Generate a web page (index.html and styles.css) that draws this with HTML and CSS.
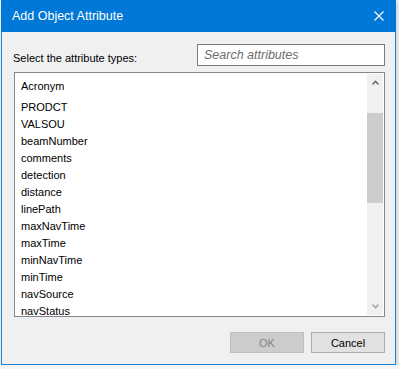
FILE: index.html
```html
<!DOCTYPE html>
<html lang="en">
<head>
  <meta charset="UTF-8" />
  <title>Add Object Attribute</title>
  <link rel="stylesheet" href="styles.css">
</head>
<body>
  <div class="window">
    <div class="titlebar">
      <span class="title">Add Object Attribute</span>
      <svg class="close" width="10" height="10" viewBox="0 0 10 10">
        <path d="M0.5 0.5 L9.5 9.5 M9.5 0.5 L0.5 9.5" stroke="#fff" stroke-width="1.1" fill="none"/>
      </svg>
    </div>

    <div class="content">
      <div class="top-row">
        <span class="label">Select the attribute types:</span>
        <div class="search">Search attributes</div>
      </div>

      <div class="listbox">
        <ul class="items">
          <li class="first">Acronym</li>
          <li>PRODCT</li>
          <li>VALSOU</li>
          <li>beamNumber</li>
          <li>comments</li>
          <li>detection</li>
          <li>distance</li>
          <li>linePath</li>
          <li>maxNavTime</li>
          <li>maxTime</li>
          <li>minNavTime</li>
          <li>minTime</li>
          <li>navSource</li>
          <li>navStatus</li>
        </ul>
        <div class="scrollbar">
          <div class="arrow">
            <svg width="7" height="5" viewBox="0 0 7 5"><path d="M0.5 4.5 L3.5 1.2 L6.5 4.5" stroke="#606060" stroke-width="1.4" fill="none"/></svg>
          </div>
          <div class="track">
            <div class="thumb"></div>
          </div>
          <div class="arrow">
            <svg width="7" height="5" viewBox="0 0 7 5"><path d="M0.5 0.5 L3.5 3.8 L6.5 0.5" stroke="#a0a0a0" stroke-width="1.4" fill="none"/></svg>
          </div>
        </div>
      </div>

      <div class="buttons">
        <button class="btn disabled">OK</button>
        <button class="btn">Cancel</button>
      </div>
    </div>
  </div>
</body>
</html>
```

FILE: styles.css
```css
body {
  margin: 0;
  background: #f4f4f4;
  font-family: "Liberation Sans", Arial, sans-serif;
  font-size: 11px;
  color: #000;
}

.window {
  margin-left: 1px;
  width: 395px;
  height: 365px;
  box-sizing: border-box;
  border: 1px solid #1883d7;
  border-top: none;
  background: #f0f0f0;
  box-shadow: 1px 2px 4px rgba(0, 0, 0, 0.18);
  display: flex;
  flex-direction: column;
}

.titlebar {
  height: 32px;
  margin: 0 -1px;
  background: #0078d7;
  color: #fff;
  display: flex;
  align-items: center;
  justify-content: space-between;
  padding: 0 12px 0 11px;
  flex-shrink: 0;
}

.title {
  font-size: 12.5px;
  margin-top: -1px;
}

.close {
  display: block;
  margin-top: -1px;
}

.content {
  flex: 1;
  display: flex;
  flex-direction: column;
  padding: 12px 10px 0 11px;
}

.top-row {
  display: flex;
  justify-content: space-between;
  align-items: flex-end;
  height: 22px;
  margin-bottom: 6px;
}

.label {
  line-height: 16px;
}

.search {
  width: 188px;
  height: 22px;
  box-sizing: border-box;
  border: 1px solid #7a7a7a;
  background: #fff;
  color: #6d6d6d;
  font-style: italic;
  font-size: 12.5px;
  padding: 2px 6px;
  line-height: 17px;
}

.listbox {
  height: 245px;
  box-sizing: border-box;
  border: 1px solid #828790;
  background: #fff;
  padding: 1px;
  display: flex;
  margin-left: 1px;
}

.items {
  list-style: none;
  margin: 0;
  padding: 1px 0 0 5px;
  flex: 1;
  overflow: hidden;
}

.items li {
  height: 17px;
  line-height: 17px;
}

.items li.first {
  height: 24px;
  line-height: 23px;
}

.scrollbar {
  width: 16px;
  background: #f0f0f0;
  display: flex;
  flex-direction: column;
}

.arrow {
  height: 17px;
  display: flex;
  align-items: center;
  justify-content: center;
  flex-shrink: 0;
}

.track {
  flex: 1;
  padding-top: 22px;
}

.thumb {
  height: 90px;
  background: #cdcdcd;
}

.buttons {
  display: flex;
  justify-content: flex-end;
  gap: 7px;
  margin-top: 15px;
}

.btn {
  width: 74px;
  height: 21px;
  box-sizing: border-box;
  border: 1px solid #adadad;
  background: #e1e1e1;
  font-family: inherit;
  font-size: 11px;
  color: #000;
  padding: 0;
}

.btn.disabled {
  background: #cccccc;
  border-color: #bfbfbf;
  color: #838383;
}
```
